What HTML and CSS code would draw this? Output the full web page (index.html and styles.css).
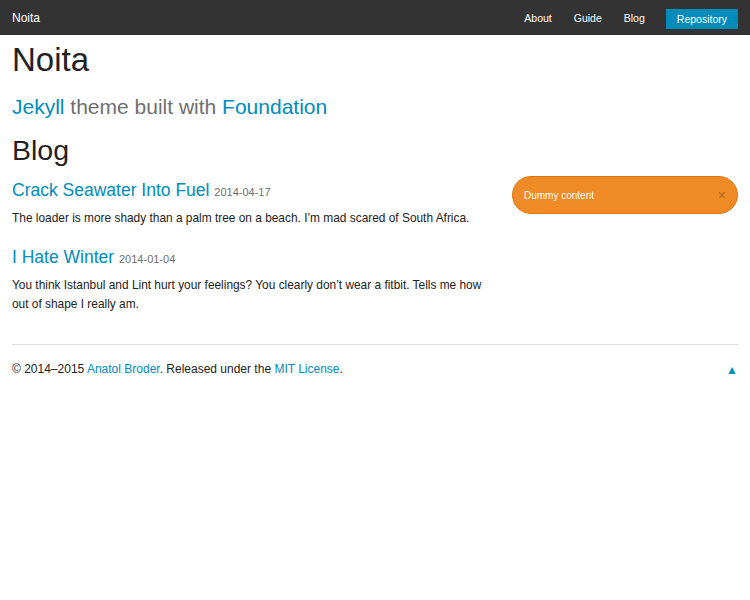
FILE: index.html
```html
<!DOCTYPE html>
<html>
<head>
<meta charset="utf-8">
<title>Noita</title>
<link rel="stylesheet" href="styles.css">
</head>
<body>
<nav class="topbar">
  <a class="brand" href="#">Noita</a>
  <ul class="menu">
    <li><a href="#">About</a></li>
    <li><a href="#">Guide</a></li>
    <li><a href="#">Blog</a></li>
    <li><a class="button" href="#">Repository</a></li>
  </ul>
</nav>
<header class="header">
  <h1 class="title">Noita</h1>
  <h3 class="subheader"><a href="#">Jekyll</a> theme built with <a href="#">Foundation</a></h3>
</header>
<main class="main">
  <h2 class="section-title">Blog</h2>
  <div class="row">
    <div class="col-main">
      <article class="post">
        <h4 class="post-title"><a href="#">Crack Seawater Into Fuel</a> <small class="date">2014-04-17</small></h4>
        <p>The loader is more shady than a palm tree on a beach. I’m mad scared of South Africa.</p>
      </article>
      <article class="post">
        <h4 class="post-title"><a href="#">I Hate Winter</a> <small class="date">2014-01-04</small></h4>
        <p>You think Istanbul and Lint hurt your feelings? You clearly don’t wear a fitbit. Tells me how out of shape I really am.</p>
      </article>
    </div>
    <aside class="col-side">
      <div class="alert">
        <span>Dummy content</span>
        <a class="close" href="#">×</a>
      </div>
    </aside>
  </div>
</main>
<footer class="footer">
  <p>© 2014–2015 <a href="#">Anatol Broder</a>. Released under the <a href="#">MIT License</a>.</p>
  <a class="totop" href="#">▲</a>
</footer>
</body>
</html>
```

FILE: styles.css
```css
* { box-sizing: border-box; }
body {
  margin: 0;
  font-family: "Liberation Sans", Arial, sans-serif;
  color: #222;
  background: #fff;
}
a { color: #008cba; text-decoration: none; }

.topbar {
  height: 35px;
  background: #333;
  display: flex;
  align-items: center;
  padding: 0 12px;
}
.brand { color: #fff; font-size: 12px; }
.menu {
  list-style: none;
  margin: 0 0 0 auto;
  padding: 0;
  display: flex;
  align-items: center;
}
.menu a { color: #fff; font-size: 10.5px; padding: 0 11px; display: block; line-height: 20px; }
.menu a.button {
  background: #008cba;
  padding: 0 11px;
  margin-left: 10px;
  height: 20px;
  margin-top: 2px;
}

.header { padding: 0 12px; }
.title {
  font-size: 33px;
  font-weight: normal;
  line-height: 40px;
  margin: 5px 0 0;
}
.subheader {
  font-size: 21px;
  font-weight: normal;
  color: #6f6f6f;
  line-height: 28px;
  margin: 13px 0 0;
}

.main { padding: 0 12px; }
.section-title {
  font-size: 28.5px;
  font-weight: normal;
  line-height: 34px;
  margin: 12px 0 0;
}
.row { display: flex; margin: 0 -12px; }
.col-main { width: 500px; padding: 0 12px; }
.col-side { width: 250px; padding: 0 12px; }

.post-title {
  font-size: 17.5px;
  font-weight: normal;
  line-height: 24px;
  margin: 11px 0 0;
}
.date { font-size: 11px; color: #6f6f6f; }
.post p {
  font-size: 11.9px;
  line-height: 19px;
  margin: 5px 0 0;
}
.post + .post .post-title { margin-top: 17px; }

.alert {
  margin-top: 9px;
  background: #f08a24;
  border: 1px solid #de770f;
  border-radius: 1000px;
  height: 38px;
  padding: 0 11px;
  display: flex;
  align-items: center;
  color: #fff;
  font-size: 10px;
}
.alert .close {
  margin-left: auto;
  color: #333;
  opacity: 0.35;
  font-size: 14px;
}

.footer {
  margin: 30px 12px 0;
  border-top: 1px solid #ddd;
  padding-top: 15px;
  display: flex;
  align-items: center;
  font-size: 12px;
}
.footer p { margin: 0; line-height: 19px; }
.totop { margin-left: auto; font-size: 12px; }
```
